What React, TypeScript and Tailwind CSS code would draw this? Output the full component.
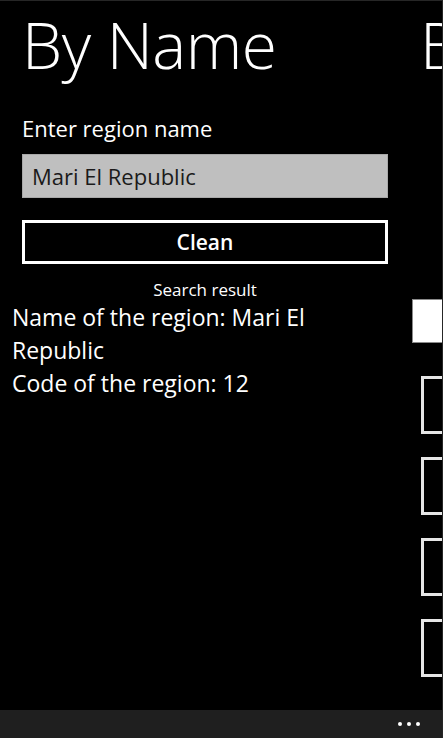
import React from 'react';

const font = { fontFamily: '"Open Sans", "Noto Sans", sans-serif' };

const SidePanel: React.FC = () => (
  <div className="flex w-[120px] shrink-0 flex-col overflow-hidden">
    <h1 className="mt-[12px] ml-[8px] whitespace-nowrap text-[64px] font-light leading-none text-white">By Code</h1>
    <div className="mt-[222px] h-[44px] w-full border border-[#8a8a8a] bg-white" />
    <div className="ml-[9px] mt-[33px] flex flex-col gap-[23px]">
      {[0, 1, 2, 3].map((i) => (
        <div key={i} className="h-[58px] w-full border-[3px] border-[#e6e6e6]" />
      ))}
    </div>
  </div>
);

export default function App() {
  return (
    <div className="flex h-[738px] w-[443px] flex-col overflow-hidden border-t border-r border-[#262626] bg-black text-white" style={font}>
      <div className="flex flex-1 overflow-hidden">
        <div className="flex w-[412px] shrink-0 flex-col">
          <h1 className="ml-[22px] mt-[12px] text-[64px] font-light leading-none tracking-[-0.5px]">By Name</h1>

          <div className="ml-[22px] w-[366px]">
            <p className="mt-[37px] text-[22px] leading-[28px]">Enter region name</p>
            <div className="mt-[12px] flex h-[44px] items-center border border-[#a8a8a8] bg-[#bfbfbf] px-[9px] text-[22px] leading-[28px] text-[#1a1a1a]">
              Mari El Republic
            </div>
            <button className="mt-[22px] flex h-[44px] w-full items-center justify-center border-[3px] border-white text-[21px] font-semibold leading-[28px]">
              Clean
            </button>
            <p className="mt-[16px] text-center text-[17px] leading-[20px]">Search result</p>
          </div>

          <div className="ml-[12px] mt-[1px] w-[366px] text-[23px] leading-[33px]">
            <p>Name of the region: Mari El Republic</p>
            <p>Code of the region: 12</p>
          </div>
        </div>
        <SidePanel />
      </div>

      <div className="flex h-[28px] shrink-0 items-center justify-end gap-[5px] bg-[#1f1f1f] pr-[22px]">
        <span className="h-[4px] w-[4px] rounded-full bg-white" />
        <span className="h-[4px] w-[4px] rounded-full bg-white" />
        <span className="h-[4px] w-[4px] rounded-full bg-white" />
      </div>
    </div>
  );
}
